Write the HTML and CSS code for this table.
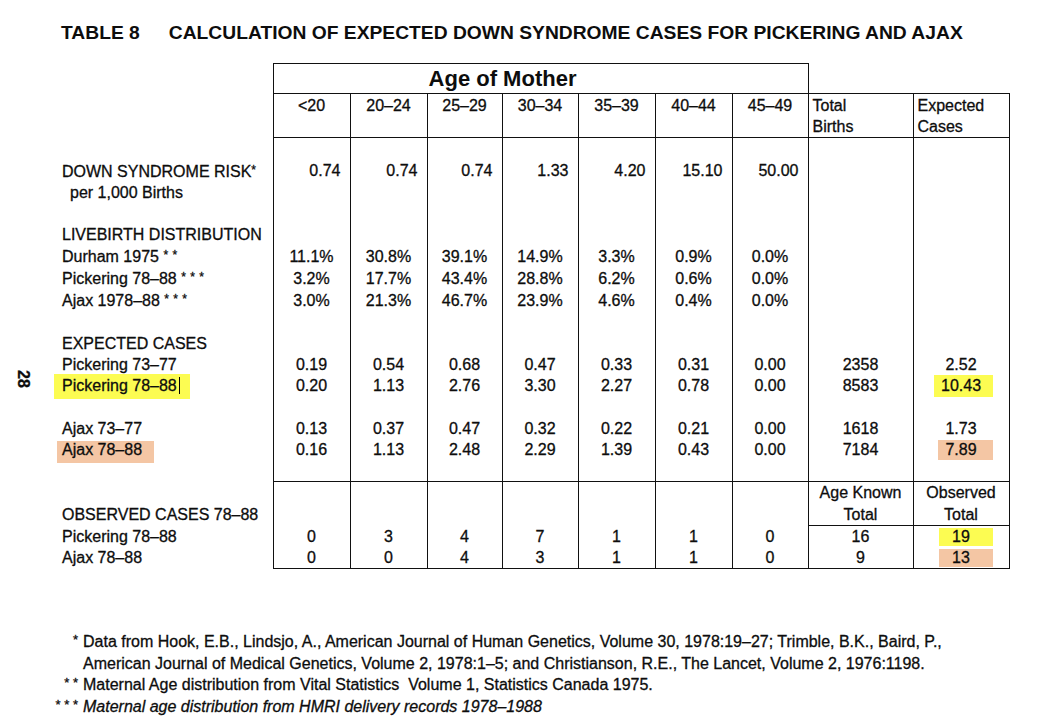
FILE: index.html
```html
<!DOCTYPE html>
<html>
<head>
<meta charset="utf-8">
<title>Table 8</title>
<link rel="stylesheet" href="styles.css">
</head>
<body>
<div class="page">
  <div class="pageno">28</div>
  <h1 class="title"><span class="tno">TABLE 8</span>CALCULATION OF EXPECTED DOWN SYNDROME CASES FOR PICKERING AND AJAX</h1>

  <table class="tbl">
    <colgroup>
      <col class="c-label"><col class="c-a"><col class="c-a"><col class="c-b"><col class="c-c"><col class="c-a"><col class="c-a"><col class="c-c"><col class="c-tot"><col class="c-exp">
    </colgroup>
    <tr class="r-age">
      <td class="lbl"></td>
      <td class="age" colspan="7">Age of Mother</td>
      <td class="void"></td><td class="void"></td>
    </tr>
    <tr class="r-head">
      <td class="lbl"></td>
      <td class="hd">&lt;20</td><td class="hd">20–24</td><td class="hd">25–29</td><td class="hd">30–34</td><td class="hd">35–39</td><td class="hd">40–44</td><td class="hd">45–49</td>
      <td class="hd hd-l">Total<br>Births</td><td class="hd hd-l">Expected<br>Cases</td>
    </tr>
    <tr class="sp-top"><td class="lbl"></td><td></td><td></td><td></td><td></td><td></td><td></td><td></td><td></td><td></td></tr>

    <tr class="row"><td class="lbl">DOWN SYNDROME RISK<span class="ast">*</span></td>
      <td class="r">0.74</td><td class="r">0.74</td><td class="r">0.74</td><td class="r">1.33</td><td class="r">4.20</td><td class="r">15.10</td><td class="r">50.00</td><td></td><td></td></tr>
    <tr class="row"><td class="lbl ind">per 1,000 Births</td><td></td><td></td><td></td><td></td><td></td><td></td><td></td><td></td><td></td></tr>
    <tr class="row"><td class="lbl"></td><td></td><td></td><td></td><td></td><td></td><td></td><td></td><td></td><td></td></tr>
    <tr class="row"><td class="lbl">LIVEBIRTH DISTRIBUTION</td><td></td><td></td><td></td><td></td><td></td><td></td><td></td><td></td><td></td></tr>
    <tr class="row"><td class="lbl">Durham 1975 <span class="ast">* *</span></td>
      <td>11.1%</td><td>30.8%</td><td>39.1%</td><td>14.9%</td><td>3.3%</td><td>0.9%</td><td>0.0%</td><td></td><td></td></tr>
    <tr class="row"><td class="lbl">Pickering 78–88 <span class="ast">* * *</span></td>
      <td>3.2%</td><td>17.7%</td><td>43.4%</td><td>28.8%</td><td>6.2%</td><td>0.6%</td><td>0.0%</td><td></td><td></td></tr>
    <tr class="row"><td class="lbl">Ajax 1978–88 <span class="ast">* * *</span></td>
      <td>3.0%</td><td>21.3%</td><td>46.7%</td><td>23.9%</td><td>4.6%</td><td>0.4%</td><td>0.0%</td><td></td><td></td></tr>
    <tr class="row"><td class="lbl"></td><td></td><td></td><td></td><td></td><td></td><td></td><td></td><td></td><td></td></tr>
    <tr class="row"><td class="lbl">EXPECTED CASES</td><td></td><td></td><td></td><td></td><td></td><td></td><td></td><td></td><td></td></tr>
    <tr class="row"><td class="lbl">Pickering 73–77</td>
      <td>0.19</td><td>0.54</td><td>0.68</td><td>0.47</td><td>0.33</td><td>0.31</td><td>0.00</td><td>2358</td><td>2.52</td></tr>
    <tr class="row"><td class="lbl"><span class="mark-y lbl-pick">Pickering 78–88<span class="caret"></span></span></td>
      <td>0.20</td><td>1.13</td><td>2.76</td><td>3.30</td><td>2.27</td><td>0.78</td><td>0.00</td><td>8583</td><td><span class="mark-y v-1043">10.43</span></td></tr>
    <tr class="row"><td class="lbl"></td><td></td><td></td><td></td><td></td><td></td><td></td><td></td><td></td><td></td></tr>
    <tr class="row"><td class="lbl">Ajax 73–77</td>
      <td>0.13</td><td>0.37</td><td>0.47</td><td>0.32</td><td>0.22</td><td>0.21</td><td>0.00</td><td>1618</td><td>1.73</td></tr>
    <tr class="row"><td class="lbl"><span class="mark-o lbl-ajax">Ajax 78–88</span></td>
      <td>0.16</td><td>1.13</td><td>2.48</td><td>2.29</td><td>1.39</td><td>0.43</td><td>0.00</td><td>7184</td><td><span class="mark-o v-789">7.89</span></td></tr>
    <tr class="sp-bot"><td class="lbl"></td><td></td><td></td><td></td><td></td><td></td><td></td><td></td><td></td><td></td></tr>

    <tr class="o1"><td class="lbl"></td><td></td><td></td><td></td><td></td><td></td><td></td><td></td><td class="tot">Age Known</td><td class="exp">Observed</td></tr>
    <tr class="o2"><td class="lbl">OBSERVED CASES 78–88</td><td></td><td></td><td></td><td></td><td></td><td></td><td></td><td class="tot">Total</td><td class="exp">Total</td></tr>
    <tr class="o3"><td class="lbl">Pickering 78–88</td>
      <td>0</td><td>3</td><td>4</td><td>7</td><td>1</td><td>1</td><td>0</td><td class="tot">16</td><td class="exp"><span class="mark-y v-obs">19</span></td></tr>
    <tr class="o4"><td class="lbl">Ajax 78–88</td>
      <td>0</td><td>0</td><td>4</td><td>3</td><td>1</td><td>1</td><td>0</td><td class="tot">9</td><td class="exp"><span class="mark-o v-obs">13</span></td></tr>
  </table>

  <div class="notes">
    <p class="fn"><span class="fm">*</span>Data from Hook, E.B., Lindsjo, A., American Journal of Human Genetics, Volume 30, 1978:19–27; Trimble, B.K., Baird, P., American Journal of Medical Genetics, Volume 2, 1978:1–5; and Christianson, R.E., The Lancet, Volume 2, 1976:1198.</p>
    <p class="fn"><span class="fm">* *</span>Maternal Age distribution from Vital Statistics&nbsp; Volume 1, Statistics Canada 1975.</p>
    <p class="fn fn-it"><span class="fm">* * *</span>Maternal age distribution from HMRI delivery records 1978–1988</p>
  </div>
</div>
</body>
</html>
```

FILE: styles.css
```css
html, body {
  margin: 0;
  padding: 0;
  background: #ffffff;
}

body {
  font-family: "Liberation Sans", Arial, Helvetica, sans-serif;
  color: #0d0d0d;
  -webkit-text-stroke: 0.3px #0d0d0d;
}

.page {
  position: relative;
  width: 1050px;
  height: 728px;
  overflow: hidden;
}

.pageno {
  position: absolute;
  left: 14px;
  top: 370px;
  writing-mode: vertical-rl;
  font-size: 16px;
  font-weight: bold;
  line-height: 18px;
}

.title {
  margin: 0;
  padding: 21px 0 0 61px;
  font-size: 19.25px;
  font-weight: bold;
  line-height: 24px;
  white-space: nowrap;
  -webkit-text-stroke: 0;
}

.tno {
  margin-right: 29px;
}

/* ---------- table ---------- */
.tbl {
  margin: 18px 0 0 56px;
  border-collapse: collapse;
  table-layout: fixed;
  width: 953px;
  font-size: 16px;
}

.c-label { width: 217px; }
.c-a { width: 77px; }
.c-b { width: 75px; }
.c-c { width: 76px; }
.c-tot { width: 105px; }
.c-exp { width: 96px; }

.tbl td {
  padding: 0;
  line-height: 21px;
  text-align: center;
  vertical-align: middle;
  white-space: nowrap;
  border-left: 1px solid #111;
  border-right: 1px solid #111;
}

.tbl td.lbl {
  border: none;
  text-align: left;
  padding-left: 6px;
}

.tbl td.lbl.ind {
  padding-left: 14px;
}

.tbl td.void {
  border: none;
}

.r-age { height: 30px; }
.r-age .age {
  border-top: 1px solid #111;
  border-bottom: 1px solid #111;
  font-size: 22px;
  font-weight: bold;
  padding-right: 76px;
  line-height: 26px;
  -webkit-text-stroke: 0;
}

.r-head { height: 43px; }
.r-head td.hd {
  vertical-align: top;
  padding-top: 1px;
  border-top: 1px solid #111;
  border-bottom: 1px solid #111;
}
.r-head td.hd-l {
  text-align: left;
  padding-left: 4px;
}

.sp-top { height: 22px; }
.row { height: 21.3px; }
.sp-bot { height: 21.5px; }
.sp-bot td { border-bottom: 1px solid #111; }
.sp-bot td.lbl { border: none; }

.tbl td.r {
  text-align: right;
  padding-right: 9px;
}

.ast {
  font-size: 12px;
  vertical-align: 3px;
  letter-spacing: 0.5px;
}

/* observed block */
.o1 { height: 21px; }
.o2 { height: 22px; }
.o3, .o4 { height: 21.5px; }
.o1 td { border-top: 1px solid #111; }
.o1 td.lbl { border: none; }
.o2 td.tot, .o2 td.exp { border-bottom: 1px solid #111; }
.o4 td { border-bottom: 1px solid #111; }
.o4 td.lbl { border: none; }

/* highlights */
.mark-y { background: #fcfc52; }
.mark-o { background: #f4c6a4; }

.lbl-pick {
  padding: 3px 10px 5px 8px;
  margin: 0 -10px 0 -8px;
}
.lbl-ajax {
  padding: 0 12px 5px 5px;
  margin: 0 -12px 0 -5px;
}
.v-1043 {
  padding: 2px 12px 3px 7px;
  margin: 0 -12px 0 -7px;
}
.v-789 {
  padding: 1px 16px 2px 7px;
  margin: 0 -16px 0 -7px;
}
.v-obs {
  padding: 0 23px 1px 13px;
  margin: 0 -23px 0 -13px;
}

.caret {
  display: inline-block;
  width: 1px;
  height: 17px;
  margin-left: 2px;
  background: #000;
  vertical-align: -3px;
}

/* footnotes */
.notes {
  margin-top: 62px;
  padding-left: 83px;
  font-size: 16px;
}

.fn {
  margin: 0;
  line-height: 21.6px;
  width: 900px;
}

.fm {
  display: inline-block;
  width: 32px;
  margin-left: -32px;
  padding-right: 5px;
  box-sizing: border-box;
  text-align: right;
  white-space: nowrap;
  font-size: 13px;
  vertical-align: 3px;
  line-height: 10px;
  letter-spacing: 0;
  font-style: normal;
}

.fn-it {
  font-style: italic;
}
```
